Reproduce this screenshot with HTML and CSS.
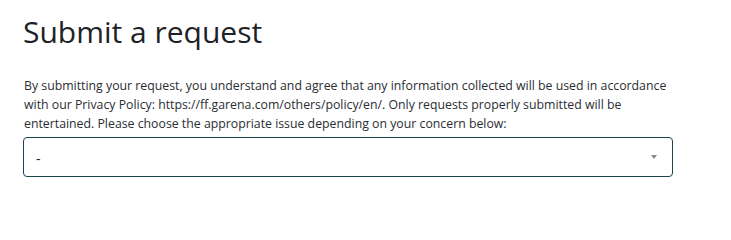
FILE: index.html
```html
<!DOCTYPE html>
<html lang="en">
<head>
<meta charset="utf-8">
<title>Submit a request</title>
<link rel="stylesheet" href="styles.css">
</head>
<body>
<main class="page">
  <h1 class="title">Submit a request</h1>
  <p class="notice">By submitting your request, you understand and agree that any information collected will be used in accordance with our Privacy Policy: https://ff.garena.com/others/policy/en/. Only requests properly submitted will be entertained. Please choose the appropriate issue depending on your concern below:</p>
  <div class="select">
    <span class="select-value">-</span>
    <span class="select-arrow"></span>
  </div>
</main>
</body>
</html>
```

FILE: styles.css
```css
html, body {
  margin: 0;
  padding: 0;
  background: #ffffff;
}
body {
  font-family: "Open Sans", "Noto Sans", "Liberation Sans", sans-serif;
  color: #1e2226;
}
.page {
  padding: 10px 0 0 23px;
  width: 650px;
}
.title {
  margin: 0;
  font-size: 30px;
  font-weight: 400;
  line-height: 44px;
  color: #1e2226;
}
.notice {
  margin: 22px 0 4px 1px;
  font-size: 12.3px;
  line-height: 19px;
  color: #2a2e33;
}
.select {
  box-sizing: border-box;
  height: 40px;
  border: 1px solid #1c4450;
  border-radius: 4px;
  display: flex;
  align-items: center;
  justify-content: space-between;
  padding: 2px 15px 0 12px;
}
.select-value {
  font-size: 14px;
  color: #1e2226;
}
.select-arrow {
  width: 0;
  height: 0;
  margin-top: -3px;
  border-left: 3px solid transparent;
  border-right: 3px solid transparent;
  border-top: 4px solid #888888;
}
```
